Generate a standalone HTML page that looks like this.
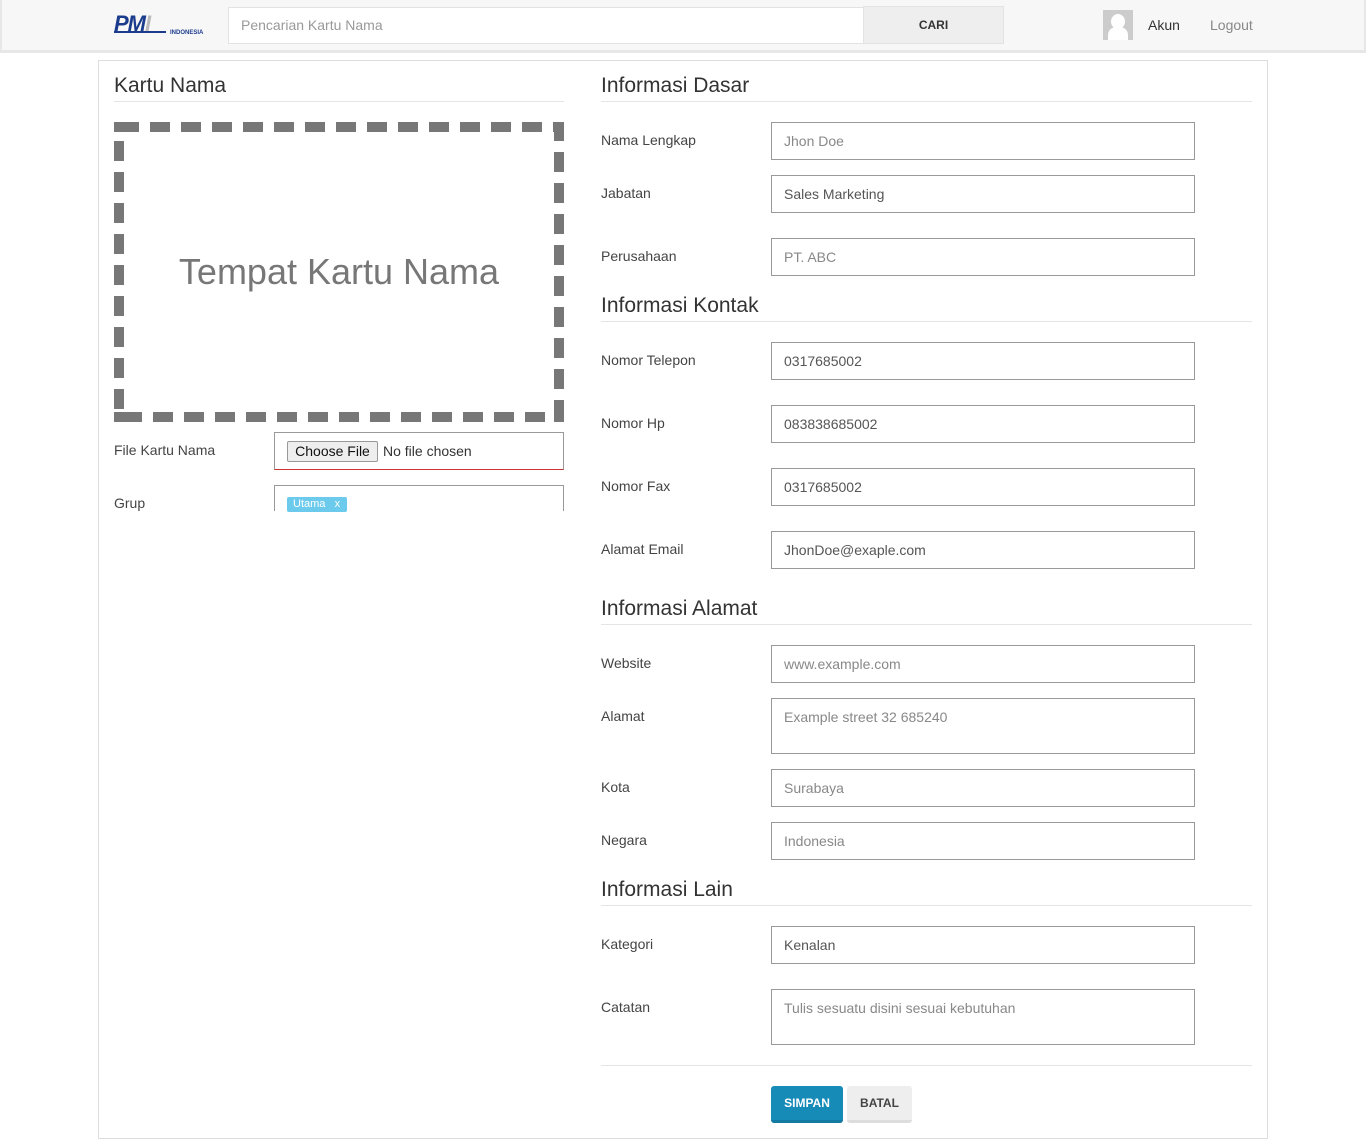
<!DOCTYPE html>
<html><head><style>
*{box-sizing:border-box;margin:0;padding:0}
body{width:1366px;height:1139px;background:#fff;font-family:"Liberation Sans",sans-serif;position:relative;overflow:hidden;color:#333}
.a{position:absolute}
.hdr{left:0;top:0;width:1366px;height:53px;background:#f7f7f7;border-bottom:3px solid #e7e7e7;border-left:2px solid #e7e7e7;border-right:2px solid #e7e7e7}
.lbl{font-size:14px;color:#444;left:601px}
.inp{left:771px;width:424px;height:38px;border:1px solid #999;font-size:14px;color:#555;padding:0 12px;line-height:36px;background:#fff}
.ph{color:#888}
h2{position:absolute;left:601px;width:651px;font-size:21px;font-weight:normal;color:#333;border-bottom:1px solid #e5e5e5;padding-bottom:3px;line-height:24px}
</style></head><body>
<div class="a hdr"></div>
<div class="a" style="left:114px;top:14px;font:italic bold 22px 'Liberation Sans';color:#1b3c8c;letter-spacing:-1px;line-height:20px">PM<span style="color:#bbb">I</span></div>
<div class="a" style="left:114px;top:31px;width:52px;height:2px;background:#1b3c8c"></div>
<div class="a" style="left:170px;top:30px;font-size:6px;font-weight:bold;color:#1b3c8c">INDONESIA</div>
<div class="a" style="left:228px;top:7px;width:636px;height:37px;background:#fff;border:1px solid #e3e3e3;font-size:14px;color:#999;padding-left:12px;line-height:35px">Pencarian Kartu Nama</div>
<div class="a" style="left:863px;top:6px;width:141px;height:38px;background:#eee;border:1px solid #e3e3e3;font-size:12px;font-weight:bold;text-align:center;line-height:36px;color:#333">CARI</div>
<div class="a" style="left:1103px;top:10px;width:30px;height:30px;background:#ccc"><div class="a" style="left:8px;top:4px;width:14px;height:15px;border-radius:50%;background:#fff"></div><div class="a" style="left:5px;top:17px;width:20px;height:13px;border-radius:8px 8px 0 0;background:#fff"></div></div>
<div class="a" style="left:1148px;top:17px;font-size:14px;color:#333">Akun</div>
<div class="a" style="left:1210px;top:17px;font-size:14px;color:#888">Logout</div>

<div class="a" style="left:98px;top:60px;width:1170px;height:1079px;border:1px solid #ddd"></div>

<h2 style="left:114px;width:450px;top:74px">Kartu Nama</h2>
<svg class="a" style="left:114px;top:122px" width="450" height="300"><rect x="5" y="5" width="440" height="290" fill="none" stroke="#777" stroke-width="10" stroke-dasharray="20 11"/><rect x="0" y="0" width="10" height="10" fill="#777"/><rect x="440" y="0" width="10" height="10" fill="#777"/><rect x="0" y="290" width="10" height="10" fill="#777"/><rect x="440" y="290" width="10" height="10" fill="#777"/><text x="225" y="162" text-anchor="middle" font-family="Liberation Sans" font-size="36" fill="#777">Tempat Kartu Nama</text></svg>
<div class="a" style="left:114px;top:442px;font-size:14px;color:#444">File Kartu Nama</div>
<div class="a" style="left:274px;top:432px;width:290px;height:38px;border:1px solid #999;border-bottom:1px solid #c33"><div class="a" style="left:12px;top:8px;width:91px;height:21px;background:#eee;border:1px solid #999;border-radius:2px;font-size:14px;text-align:center;line-height:19px;color:#111">Choose File</div><div class="a" style="left:108px;top:10px;font-size:14px;color:#333">No file chosen</div></div>
<div class="a" style="left:114px;top:495px;font-size:14px;color:#444">Grup</div>
<div class="a" style="left:274px;top:485px;width:290px;height:26px;border:1px solid #999;border-bottom:none"><div class="a" style="left:12px;top:11px;width:60px;height:15px;background:#6ccbec;border-radius:2px;color:#fff;font-size:11px;line-height:15px;padding-left:6px">Utama &nbsp; x</div></div>

<h2 style="top:74px">Informasi Dasar</h2>
<h2 style="top:294px">Informasi Kontak</h2>
<h2 style="top:597px">Informasi Alamat</h2>
<h2 style="top:878px">Informasi Lain</h2>

<div class="a lbl" style="top:132px">Nama Lengkap</div><div class="a inp ph" style="top:122px">Jhon Doe</div>
<div class="a lbl" style="top:185px">Jabatan</div><div class="a inp" style="top:175px">Sales Marketing</div>
<div class="a lbl" style="top:248px">Perusahaan</div><div class="a inp ph" style="top:238px">PT. ABC</div>
<div class="a lbl" style="top:352px">Nomor Telepon</div><div class="a inp" style="top:342px">0317685002</div>
<div class="a lbl" style="top:415px">Nomor Hp</div><div class="a inp" style="top:405px">083838685002</div>
<div class="a lbl" style="top:478px">Nomor Fax</div><div class="a inp" style="top:468px">0317685002</div>
<div class="a lbl" style="top:541px">Alamat Email</div><div class="a inp" style="top:531px">JhonDoe@exaple.com</div>
<div class="a lbl" style="top:655px">Website</div><div class="a inp ph" style="top:645px">www.example.com</div>
<div class="a lbl" style="top:708px">Alamat</div><div class="a inp ph" style="top:698px;height:56px">Example street 32 685240</div>
<div class="a lbl" style="top:779px">Kota</div><div class="a inp ph" style="top:769px">Surabaya</div>
<div class="a lbl" style="top:832px">Negara</div><div class="a inp ph" style="top:822px">Indonesia</div>
<div class="a lbl" style="top:936px">Kategori</div><div class="a inp" style="top:926px">Kenalan</div>
<div class="a lbl" style="top:999px">Catatan</div><div class="a inp ph" style="top:989px;height:56px">Tulis sesuatu disini sesuai kebutuhan</div>

<div class="a" style="left:601px;top:1065px;width:651px;border-top:1px solid #e5e5e5"></div>
<div class="a" style="left:771px;top:1086px;width:72px;height:37px;background:#178bb8;border-bottom:3px solid #137aa2;border-radius:3px;color:#fff;font-size:12px;font-weight:bold;text-align:center;line-height:34px">SIMPAN</div>
<div class="a" style="left:847px;top:1086px;width:65px;height:37px;background:#eee;border-bottom:3px solid #ddd;border-radius:3px;color:#444;font-size:12px;font-weight:bold;text-align:center;line-height:34px">BATAL</div>
</body></html>
